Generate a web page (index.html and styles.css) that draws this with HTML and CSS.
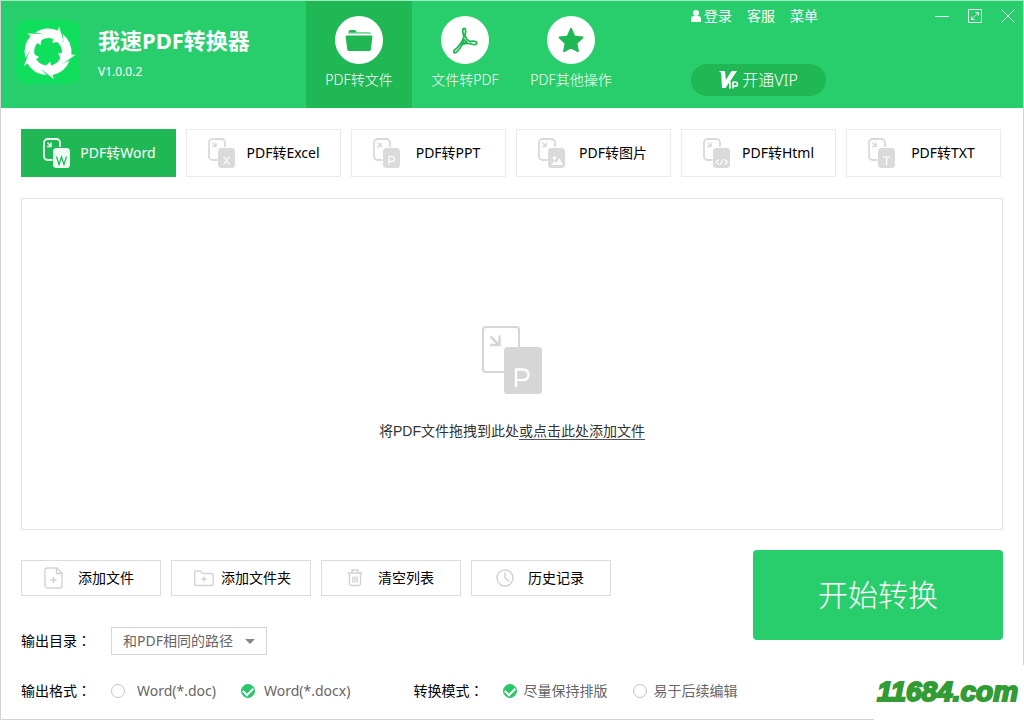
FILE: index.html
```html
<!DOCTYPE html>
<html lang="zh-CN">
<head>
<meta charset="utf-8">
<meta name="viewport" content="width=device-width, initial-scale=1">
<title>我速PDF转换器</title>
<link rel="stylesheet" href="styles.css">
</head>
<body>
<svg class="defs" aria-hidden="true">
  <symbol id="sheets" viewBox="0 0 27 30">
    <path d="M9.500 22H4.500a3.500 3.500 0 0 1-3.500-3.500V4.500A3.500 3.500 0 0 1 4.500 1h9A3.500 3.500 0 0 1 17 4.500V9" fill="none" stroke="currentColor" stroke-width="1.800"/>
    <path d="M4.500 4.800l3 3M8 4.500v4H4" fill="none" stroke="currentColor" stroke-width="1.400"/>
    <rect x="10" y="10" width="17" height="20" rx="3.500" fill="currentColor"/>
  </symbol>
  <symbol id="segment" viewBox="0 0 64 64">
    <path d="M19.300 12.500A23.500 23.500 0 0 1 41.800 10.600L43.200 6.500 47.500 21.500 36 22.700 37.500 19.200A13.800 13.800 0 0 0 24.200 20.800L27 14Z" fill="#fff"/>
  </symbol>
</svg>
<div class="app">
  <header class="header">
    <div class="brand">
      <svg class="logo" viewBox="0 0 64 64" aria-hidden="true">
        <rect width="64" height="64" rx="10" fill="#10df5e"/>
        <use href="#segment"/>
        <use href="#segment" transform="rotate(72 32 32)"/>
        <use href="#segment" transform="rotate(144 32 32)"/>
        <use href="#segment" transform="rotate(216 32 32)"/>
        <use href="#segment" transform="rotate(288 32 32)"/>
      </svg>
      <div class="brand-text">
        <h1 class="title">我速PDF转换器</h1>
        <span class="version">V1.0.0.2</span>
      </div>
    </div>
    <nav class="nav">
      <button class="nav-item nav-active" type="button">
        <svg class="nav-icon" viewBox="0 0 48 48" aria-hidden="true"><circle cx="24" cy="24" r="24" fill="#fff"/><path d="M13.500 18v-2q0-2 2-2h4.500l2 2.200h12q2 0 2 1.800z" fill="#1fb855"/><path d="M11.500 19.500h25q1 0 .9 1l-1.500 13q-.2 1.500-1.700 1.500H14q-1.500 0-1.700-1.500L10.600 20.500q0-1 .9-1z" fill="#1fb855"/><path d="M13.500 17.200h22" stroke="#fff" stroke-width=".8"/></svg>
        <span>PDF转文件</span>
      </button>
      <button class="nav-item" type="button">
        <svg class="nav-icon" viewBox="0 0 48 48" aria-hidden="true"><circle cx="24" cy="24" r="24" fill="#fff"/><path d="M23.200 12.500c-2.200.2-1.600 4-.3 8.200C21.300 26 18 30.500 13.600 34c-1.800 1.600-.6 3.500 1.200 2.500 3-1.600 4.500-5 6.300-8 3.500-1.300 6.500-1.700 9.500-.5 2 .8 5.200 1 5.200-1s-3.300-2-6.800-1.500c-2.400-1-4.200-3.200-5.100-6 .8-3.200 1.300-7.200-.7-7zM23 23.500l3 3-4.500.8z" fill="none" stroke="#1fb855" stroke-width="1.800" stroke-linejoin="round"/></svg>
        <span>文件转PDF</span>
      </button>
      <button class="nav-item" type="button">
        <svg class="nav-icon" viewBox="0 0 48 48" aria-hidden="true"><circle cx="24" cy="24" r="24" fill="#fff"/><path d="M24 12.800l3.200 7.700 8.200 1-6 5.700 1.500 8-6.900-3.800-6.900 3.800 1.500-8-6-5.700 8.200-1z" fill="#1fb855" stroke="#1fb855" stroke-width="2" stroke-linejoin="round"/></svg>
        <span>PDF其他操作</span>
      </button>
    </nav>
    <div class="header-side">
      <div class="topbar">
        <div class="links">
          <a class="link" href="#"><svg class="user-icon" viewBox="0 0 10 12" aria-hidden="true"><circle cx="5" cy="3" r="3" fill="#fff"/><path d="M0 12V9q0-3 3-3h4q3 0 3 3v3z" fill="#fff"/></svg>登录</a>
          <a class="link" href="#">客服</a>
          <a class="link" href="#">菜单</a>
        </div>
        <div class="window-buttons">
          <button class="window-button" type="button" aria-label="最小化"><svg viewBox="0 0 14 14" class="window-icon"><path d="M0 7.500h14"/></svg></button>
          <button class="window-button" type="button" aria-label="最大化"><svg viewBox="0 0 14 14" class="window-icon"><path d="M.5.500h13v13H.5zM4 10l6-6M7.500 3.500h3v3M6.500 10.500h-3v-3"/></svg></button>
          <button class="window-button" type="button" aria-label="关闭"><svg viewBox="0 0 14 14" class="window-icon"><path d="M.5.500l13 13M13.500.500l-13 13"/></svg></button>
        </div>
      </div>
      <button class="vip" type="button">
        <svg class="vip-icon" viewBox="0 0 20 18" aria-hidden="true"><path d="M0 0h6L6.800 9 12.500 0H18L6.500 17H3L2.200 2z" fill="#fff"/><path d="M11 10.500v7M14 17.500v-6.200h2.500q2 .1 2 1.900t-2 1.900h-2" fill="none" stroke="#fff" stroke-width="1.600"/></svg>
        <span>开通VIP</span>
      </button>
    </div>
  </header>

  <main class="main">
    <div class="formats">
      <button class="format format-active" type="button"><svg class="format-icon" viewBox="0 0 27 30" aria-hidden="true"><use href="#sheets"/><path d="M13.500 18.500l2.500 8 2.500-7.500 2.500 7.500 2.500-8" class="mark"/></svg><span class="format-name">PDF转Word</span></button>
      <button class="format" type="button"><svg class="format-icon" viewBox="0 0 27 30" aria-hidden="true"><use href="#sheets"/><path d="M15.500 18.500l6 8M21.500 18.500l-6 8" class="mark"/></svg><span class="format-name">PDF转Excel</span></button>
      <button class="format" type="button"><svg class="format-icon" viewBox="0 0 27 30" aria-hidden="true"><use href="#sheets"/><path d="M16 27v-8.500h3q2.500.2 2.500 2.400t-2.500 2.400h-3" class="mark"/></svg><span class="format-name">PDF转PPT</span></button>
      <button class="format" type="button"><svg class="format-icon" viewBox="0 0 27 30" aria-hidden="true"><use href="#sheets"/><circle cx="16.500" cy="20" r="1.700" fill="#fff"/><path d="M13 27l3.500-4 2 2 3-5 3.500 7z" fill="#fff"/></svg><span class="format-name">PDF转图片</span></button>
      <button class="format" type="button"><svg class="format-icon" viewBox="0 0 27 30" aria-hidden="true"><use href="#sheets"/><path d="M16 21.500l-3 2.500 3 2.500M21.500 21.500l3 2.500-3 2.500M20 21l-2.500 6" class="mark"/></svg><span class="format-name">PDF转Html</span></button>
      <button class="format" type="button"><svg class="format-icon" viewBox="0 0 27 30" aria-hidden="true"><use href="#sheets"/><path d="M15 19h7.500M18.700 19v8" class="mark"/></svg><span class="format-name">PDF转TXT</span></button>
    </div>

    <section class="drop">
      <svg class="drop-icon" viewBox="0 0 60 68" aria-hidden="true">
        <path d="M22 46H4a3 3 0 0 1-3-3V4a3 3 0 0 1 3-3h30a3 3 0 0 1 3 3v18" fill="none" stroke="#d6d6d6" stroke-width="2"/>
        <path d="M8.500 10.500l8 8M17.500 9.500v9.500H8" fill="none" stroke="#d6d6d6" stroke-width="2.500"/>
        <rect x="22" y="21" width="38" height="47" rx="3.500" fill="#d6d6d6"/>
        <path d="M34 61V43.500h6.500q6 .3 6 5.300t-6 5.300H34" fill="none" stroke="#fff" stroke-width="2.300"/>
      </svg>
      <p class="drop-text">将PDF文件拖拽到此处<a class="drop-link" href="#">或点击此处添加文件</a></p>
    </section>

    <section class="bottom">
      <div class="options">
        <div class="actions">
          <button class="action" type="button"><svg class="action-icon" viewBox="0 0 20 22" aria-hidden="true"><path d="M3.500 1h9.500l5 5v12.500q0 2.500-2.500 2.500H3.500Q1 21 1 18.500v-15Q1 1 3.500 1zM12.500 1v5.500H18M9.500 10v6M6.500 13h6"/></svg><span class="action-name">添加文件</span></button>
          <button class="action" type="button"><svg class="action-icon" viewBox="0 0 20 22" aria-hidden="true"><path d="M.7 17V5.500q0-1.500 1.500-1.500h4.500l2.500 2.500h8.500q1.500 0 1.500 1.500v9q0 1.500-1.500 1.500H2.200Q.7 18.500.7 17zM10 9.500v5M7.500 12h5"/></svg><span class="action-name">添加文件夹</span></button>
          <button class="action" type="button"><svg class="action-icon" viewBox="0 0 20 22" aria-hidden="true"><path d="M3.500 6h15M8 5.500V3h6v2.500M5.500 6.500v10q0 2 2 2h7q2 0 2-2v-10M8.800 9.500v6M11 9.500v6M13.200 9.500v6"/></svg><span class="action-name">清空列表</span></button>
          <button class="action" type="button"><svg class="action-icon" viewBox="0 0 20 22" aria-hidden="true"><circle cx="11" cy="11" r="8"/><path d="M11 5.500V11l4.500 3.500"/></svg><span class="action-name">历史记录</span></button>
        </div>
        <div class="row row-path">
          <label class="label" for="path">输出目录<span class="colon" lang="zh-TW">：</span></label>
          <div class="select-box"><select class="select" id="path"><option>和PDF相同的路径</option></select></div>
        </div>
        <div class="row">
          <div class="group" role="radiogroup" aria-labelledby="format-label">
            <span class="label" id="format-label">输出格式<span class="colon" lang="zh-TW">：</span></span>
            <label class="choice choice-doc"><input class="radio" type="radio" name="format">Word(*.doc)</label>
            <label class="choice choice-docx"><input class="radio" type="radio" name="format" checked>Word(*.docx)</label>
          </div>
          <div class="group" role="radiogroup" aria-labelledby="mode-label">
            <span class="label" id="mode-label">转换模式<span class="colon" lang="zh-TW">：</span></span>
            <label class="choice choice-keep"><input class="radio" type="radio" name="mode" checked>尽量保持排版</label>
            <label class="choice"><input class="radio" type="radio" name="mode">易于后续编辑</label>
          </div>
        </div>
      </div>
      <button class="start" type="button">开始转换</button>
    </section>
  </main>
  <div class="watermark">11684.com</div>
</div>
</body>
</html>
```

FILE: styles.css
```css
* { box-sizing: border-box; }

body {
  margin: 0;
  background: #fff;
  color: #000;
  font: 14px/20px "Noto Sans", "Noto Sans CJK SC", sans-serif;
}

button, select {
  margin: 0;
  padding: 0;
  border: 0;
  background: none;
  color: inherit;
  font: inherit;
}

a { color: inherit; text-decoration: none; }

.defs { position: absolute; width: 0; height: 0; }

.app {
  position: relative;
  display: flex;
  flex-direction: column;
  min-height: 100vh;
  border: 1px solid #d4d4d4;
  border-top-color: #a5e9c0;
}

/* Header */
.header {
  display: flex;
  background: #28ce6b;
  color: #fff;
}

.brand {
  display: flex;
  gap: 18px;
  width: 305px;
  padding: 19px 0 0 15px;
}

.logo { width: 64px; height: 64px; }

.title {
  margin: 4px 0 8px;
  font-size: 22px;
  line-height: 32px;
  font-weight: 700;
}

.version { display: block; font-size: 12px; line-height: 16px; }

.nav { display: flex; font-weight: 300; }

.nav-item {
  display: flex;
  flex-direction: column;
  align-items: center;
  gap: 6px;
  width: 106px;
  padding: 15px 0 18px;
  line-height: 20px;
  white-space: nowrap;
}

.nav-active { background: #1fb855; }

.nav-icon { width: 48px; height: 48px; }

.header-side { width: 332px; margin-left: auto; }

.topbar {
  display: flex;
  justify-content: space-between;
  align-items: center;
  height: 30px;
  padding-right: 8px;
}

.links { display: flex; gap: 15px; }

.link { display: flex; align-items: center; gap: 3px; }

.user-icon { width: 10px; height: 12px; }

.window-buttons { display: flex; gap: 19px; }

.window-button { width: 14px; height: 14px; }

.window-icon {
  display: block;
  width: 14px;
  height: 14px;
  fill: none;
  stroke: #e9fbf0;
}

.vip {
  display: flex;
  justify-content: center;
  align-items: center;
  gap: 3px;
  width: 135px;
  height: 32px;
  margin-top: 33px;
  border-radius: 16px;
  background: #1fb855;
  font-size: 16px;
  font-weight: 300;
}

.vip-icon { width: 20px; height: 18px; }

/* Content */
.main {
  display: flex;
  flex: 1;
  flex-direction: column;
  padding: 21px 20px 18px;
}

.formats {
  display: grid;
  grid-template-columns: repeat(6, 1fr);
  gap: 10px;
  padding-right: 2px;
}

.format {
  display: flex;
  align-items: center;
  height: 48px;
  padding: 0 9px 0 21px;
  border: 1px solid #ebebeb;
  color: #000;
}

.format-active {
  border-color: #1fb855;
  background: #1fb855;
  color: #fff;
}

.format-icon { width: 27px; height: 30px; color: #dadada; }

.format-active .format-icon { color: #effcf4; }

.mark { fill: none; stroke: #fff; stroke-width: 1.2; }

.format-active .mark { stroke: #1fb855; }

.format-name { flex: 1; text-align: center; white-space: nowrap; }

.drop {
  display: flex;
  flex: 1;
  flex-direction: column;
  justify-content: center;
  align-items: center;
  gap: 27px;
  min-height: 240px;
  margin: 21px 0 20px;
  padding-top: 38px;
  border: 1px solid #e4e4e4;
}

.drop-icon { width: 60px; height: 68px; }

.drop-text {
  margin: 0;
  color: #333;
  font-family: "Liberation Sans", "Noto Sans CJK SC", sans-serif;
}

.drop-link { border-bottom: 1px solid #555; }

.bottom {
  display: flex;
  justify-content: space-between;
  align-items: flex-start;
}

.options { padding-top: 10px; }

.actions { display: flex; gap: 10px; }

.action {
  display: flex;
  align-items: center;
  width: 140px;
  height: 36px;
  padding: 0 12px 0 22px;
  border: 1px solid #dcdcdc;
}

.action-icon {
  width: 20px;
  height: 22px;
  fill: none;
  stroke: #d2d2d2;
  stroke-width: 1.4;
}

.action-name { flex: 1; text-align: center; white-space: nowrap; }

.row { display: flex; align-items: center; gap: 63px; height: 20px; }

.row-path { gap: 0; height: 28px; margin: 31px 0 26px; }

.label { width: 90px; white-space: nowrap; }

.colon { font-family: "Noto Sans CJK TC", sans-serif; line-height: 16px; }

.select-box { position: relative; width: 156px; color: #666; }

.select-box::after {
  content: "";
  position: absolute;
  top: 12px;
  right: 12px;
  border: 5px solid transparent;
  border-top-color: #888;
  border-bottom: 0;
  pointer-events: none;
}

.select {
  display: block;
  width: 100%;
  height: 28px;
  padding-left: 11px;
  border: 1px solid #d6d6d6;
  border-radius: 0;
  appearance: none;
}

.group { display: flex; align-items: center; }

.choice {
  display: flex;
  align-items: center;
  gap: 6px;
  color: #666;
  white-space: nowrap;
}

.choice-doc { gap: 12px; margin-right: 25px; }

.choice-docx { gap: 9px; }

.choice-keep { margin-right: 26px; }

.radio {
  display: grid;
  place-items: center;
  width: 14px;
  height: 14px;
  margin: 0;
  border: 1px solid #c4c4c4;
  border-radius: 50%;
  appearance: none;
}

.radio:checked { border-color: #28c76a; background: #28c76a; }

.radio:checked::after {
  content: "";
  width: 8px;
  height: 5px;
  margin-bottom: 2px;
  border: solid #fff;
  border-width: 0 0 2px 2px;
  transform: rotate(-45deg);
}

.start {
  width: 250px;
  height: 90px;
  border-radius: 4px;
  background: #28ce6b;
  color: #fff;
  font-size: 30px;
  font-weight: 300;
  line-height: 40px;
}

.watermark {
  position: absolute;
  right: -1px;
  bottom: -1px;
  width: 150px;
  height: 55px;
  padding-right: 3px;
  background: #fff;
  color: #339b33;
  font: italic 700 28px/54px "Liberation Sans", sans-serif;
  text-align: center;
  -webkit-text-stroke: 2px #339b33;
}
```
